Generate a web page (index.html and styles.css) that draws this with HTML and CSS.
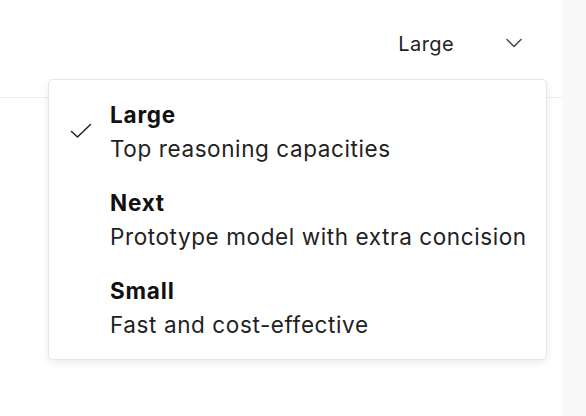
FILE: index.html
```html
<!DOCTYPE html>
<html>
<head>
<meta charset="utf-8">
<link rel="stylesheet" href="styles.css">
</head>
<body>
<div class="page">
  <div class="main">
    <header class="topbar">
      <button class="select">
        <span class="select-label">Large</span>
        <svg class="chevron" width="16" height="10" viewBox="0 0 16 10"><path d="M1 1.5 L8 8.5 L15 1.5" fill="none" stroke="#444" stroke-width="1.5" stroke-linecap="round" stroke-linejoin="round"/></svg>
      </button>
    </header>
    <div class="content"></div>
  </div>
  <aside class="side"></aside>
</div>
<div class="menu">
  <div class="item">
    <div class="check">
      <svg width="22" height="16" viewBox="0 0 22 16"><path d="M1.5 8.5 L7.5 14 L20.5 1.5" fill="none" stroke="#222" stroke-width="1.5" stroke-linecap="round" stroke-linejoin="round"/></svg>
    </div>
    <div class="text">
      <div class="title">Large</div>
      <div class="desc">Top reasoning capacities</div>
    </div>
  </div>
  <div class="item">
    <div class="check"></div>
    <div class="text">
      <div class="title">Next</div>
      <div class="desc">Prototype model with extra concision</div>
    </div>
  </div>
  <div class="item">
    <div class="check"></div>
    <div class="text">
      <div class="title">Small</div>
      <div class="desc">Fast and cost-effective</div>
    </div>
  </div>
</div>
</body>
</html>
```
FILE: styles.css
```css
* { box-sizing: border-box; }
html, body { margin: 0; padding: 0; }
body {
  font-family: Inter, "Noto Sans", sans-serif;
  color: #1f1f1f;
  background: #fff;
  width: 586px;
  height: 416px;
  overflow: hidden;
}
.page {
  display: flex;
  height: 416px;
}
.main {
  width: 562px;
  display: flex;
  flex-direction: column;
}
.topbar {
  height: 98px;
  border-bottom: 1px solid #ebebeb;
  display: flex;
  justify-content: flex-end;
  align-items: flex-start;
  padding-right: 40px;
  padding-top: 30px;
}
.select {
  display: flex;
  align-items: center;
  gap: 52px;
  background: none;
  border: 0;
  padding: 0;
  font: inherit;
  color: #1f1f1f;
  font-size: 20px;
  letter-spacing: 0.4px;
  line-height: 28px;
}
.chevron { margin-top: -2px; }
.content { flex: 1; }
.side {
  flex: 1;
  background: #f9f9f9;
}
.menu {
  position: absolute;
  left: 48px;
  top: 79px;
  width: 499px;
  height: 281px;
  background: #fff;
  border: 1px solid #e6e6e6;
  border-radius: 5px;
  box-shadow: 0 3px 8px rgba(0,0,0,0.08);
  padding: 18px 0 0 21px;
  display: flex;
  flex-direction: column;
  gap: 20px;
}
.item {
  display: flex;
}
.check {
  width: 40px;
  padding-top: 25px;
}
.title {
  font-weight: 700;
  font-size: 22.5px;
  letter-spacing: 0.8px;
  line-height: 34px;
  color: #111;
}
.desc {
  font-size: 22.5px;
  letter-spacing: 0.6px;
  line-height: 34px;
  color: #222;
}
```
